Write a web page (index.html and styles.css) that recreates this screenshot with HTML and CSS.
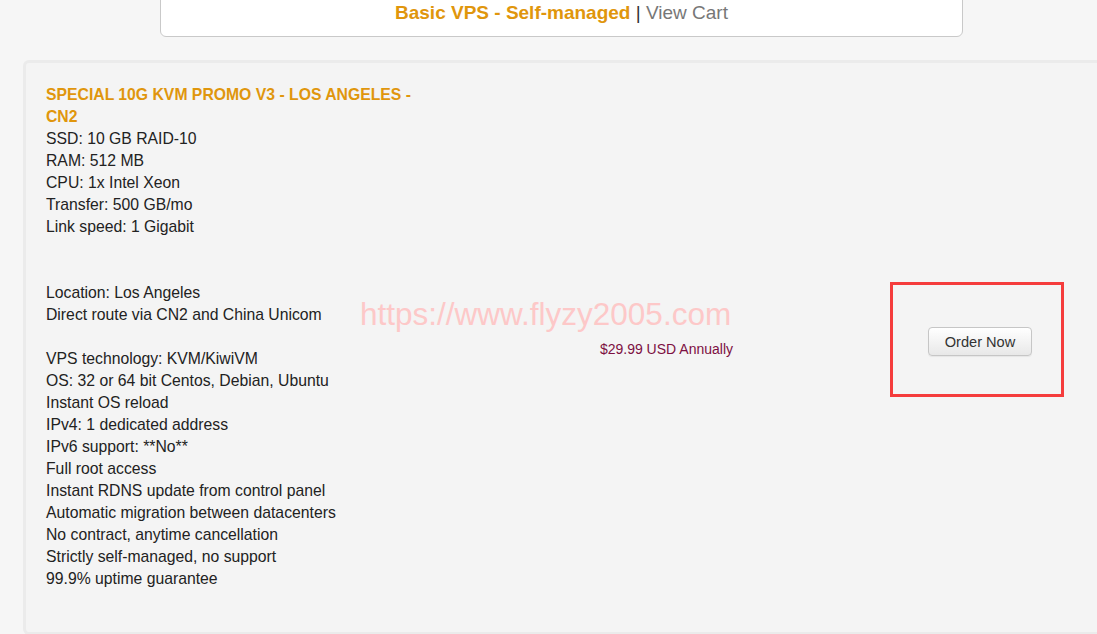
FILE: index.html
```html
<!DOCTYPE html>
<html lang="en">
<head>
  <meta charset="UTF-8" />
  <title>Basic VPS - Self-managed</title>
  <link rel="stylesheet" href="styles.css">
</head>
<body>
  <div class="cart-header">
    <span class="cat-title">Basic VPS - Self-managed</span> <span class="sep">|</span> <a class="view-cart" href="#">View Cart</a>
  </div>

  <div class="product">
    <div class="watermark">https://www.flyzy2005.com</div>
    <div class="product-row">
      <div class="product-info">
        <div class="product-name">SPECIAL 10G KVM PROMO V3 - LOS ANGELES - CN2</div>
        <div class="product-desc">
          SSD: 10 GB RAID-10<br>
          RAM: 512 MB<br>
          CPU: 1x Intel Xeon<br>
          Transfer: 500 GB/mo<br>
          Link speed: 1 Gigabit<br>
          <br>
          <br>
          Location: Los Angeles<br>
          Direct route via CN2 and China Unicom<br>
          <br>
          VPS technology: KVM/KiwiVM<br>
          OS: 32 or 64 bit Centos, Debian, Ubuntu<br>
          Instant OS reload<br>
          IPv4: 1 dedicated address<br>
          IPv6 support: **No**<br>
          Full root access<br>
          Instant RDNS update from control panel<br>
          Automatic migration between datacenters<br>
          No contract, anytime cancellation<br>
          Strictly self-managed, no support<br>
          99.9% uptime guarantee
        </div>
      </div>
      <div class="product-price">$29.99 USD Annually</div>
      <div class="order-box">
        <button class="order-btn">Order Now</button>
      </div>
    </div>
  </div>
</body>
</html>
```

FILE: styles.css
```css
* { box-sizing: border-box; }

html, body {
  overflow: hidden;
}

body {
  margin: 0;
  font-family: 'Liberation Sans', Arial, sans-serif;
  background: #f6f6f6;
  color: #222;
  height: 634px;
}

.cart-header {
  margin: -10px 0 0 160px;
  width: 803px;
  background: #fff;
  border: 1px solid #c9c9c9;
  border-radius: 0 0 6px 6px;
  padding: 11px 0 12px;
  text-align: center;
  font-size: 19px;
  line-height: 22px;
}

.cat-title {
  color: #e0960c;
  font-weight: bold;
}

.sep {
  color: #333;
}

.view-cart {
  color: #777;
  text-decoration: none;
}

.product {
  position: relative;
  margin: 23px -20px 0 23px;
  background: #f4f4f4;
  border: 3px solid #ebebeb;
  border-radius: 6px;
  padding: 21px 20px 42px;
}

.watermark {
  position: absolute;
  left: 334px;
  top: 233px;
  font-size: 31.5px;
  line-height: 36px;
  color: #fdc8c8;
  white-space: nowrap;
}

.product-row {
  display: flex;
  align-items: center;
}

.product-info {
  width: 385px;
  flex-shrink: 0;
}

.product-name {
  color: #e0960c;
  font-weight: bold;
  font-size: 15.75px;
  line-height: 22px;
}

.product-desc {
  font-size: 15.75px;
  line-height: 22px;
}

.product-price {
  width: 302px;
  flex-shrink: 0;
  text-align: right;
  font-size: 14px;
  line-height: 20px;
  color: #7d0f42;
  margin-top: 24px;
}

.order-box {
  width: 174px;
  height: 115px;
  flex-shrink: 0;
  margin-left: 157px;
  margin-top: 5px;
  border: 3px solid #f53c3c;
  display: flex;
  align-items: center;
  justify-content: center;
}

.order-btn {
  margin: 4px 0 0 6px;
  width: 104px;
  height: 29px;
  padding: 0;
  font-family: 'Liberation Sans', Arial, sans-serif;
  font-size: 14.6px;
  color: #333;
  background: linear-gradient(#ffffff, #e8e8e8);
  border: 1px solid #c6c6c6;
  border-radius: 4px;
  box-shadow: 0 1px 1px rgba(0,0,0,0.06);
  cursor: pointer;
}
```
